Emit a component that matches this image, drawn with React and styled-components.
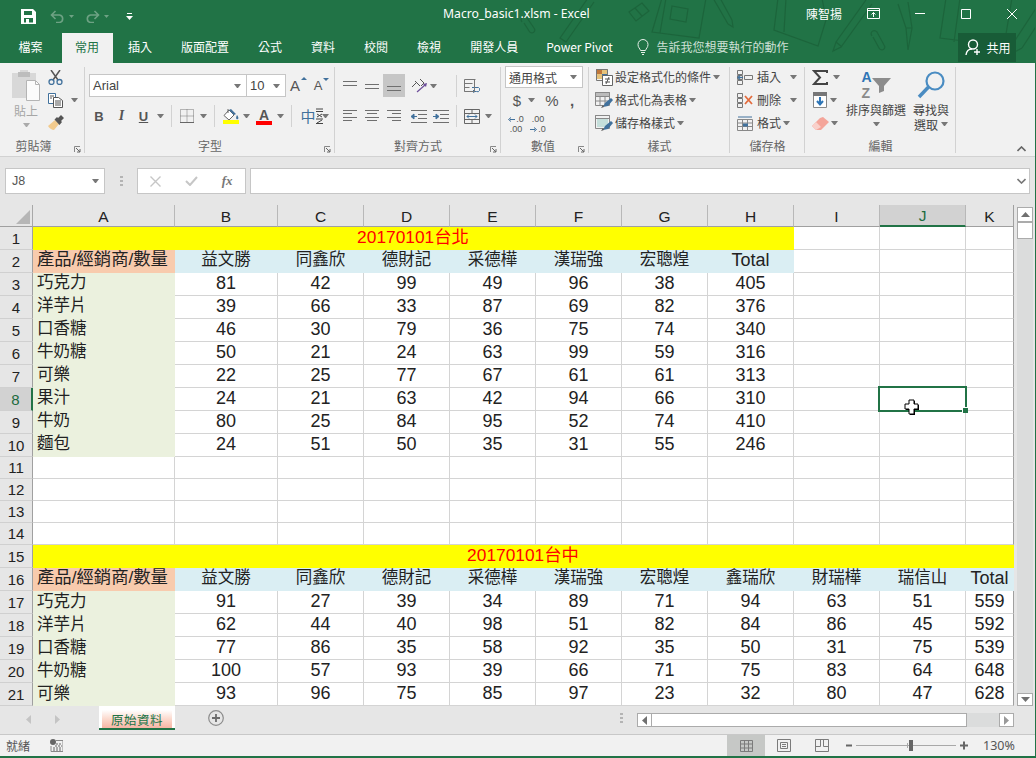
import React from 'react';
import styled, { createGlobalStyle } from 'styled-components';

const UI = `"Noto Sans", "Noto Sans CJK TC", sans-serif`;
const CJK = `"Noto Sans CJK TC", "Noto Sans", sans-serif`;
const SHEET = `"Liberation Sans", "Noto Sans CJK TC", sans-serif`;
const GREEN = '#217346';

const Global = createGlobalStyle`
  html, body { margin: 0; padding: 0; background: #e6e6e6; overflow: hidden; }
  * { box-sizing: border-box; }
`;

const Window = styled.div`
  position: relative; width: 1036px; height: 758px; display: flex; flex-direction: column;
  background: #e6e6e6; overflow: hidden; font-family: ${CJK}; font-size: 12px; color: #444;
  &::after { content: ''; position: absolute; inset: 0; border-right: 1px solid ${GREEN}; pointer-events: none; }
`;

/* ---------- header ---------- */
const Header = styled.header`position: relative; height: 63px; background: ${GREEN}; color: #fff; flex: none; overflow: hidden;`;
const Deco = styled.svg`position: absolute; left: 516px; top: 0; pointer-events: none;`;
const TitleBar = styled.div`position: relative; height: 33px; display: flex; align-items: center; padding-left: 21px;`;
const Qat = styled.div`width: 422px; display: flex; align-items: center; flex: none;`;
const QatIcon = styled.span`display: inline-flex; margin-left: ${p => p.$ml || 0}px;`;
const TitleText = styled.div`font: 12.2px ${UI}; width: 363px; flex: none; white-space: nowrap; margin-top: -6px;`;
const User = styled.div`font: 12px ${CJK}; width: 61px; flex: none; margin-top: -6px;`;
const WinBtn = styled.span`display: inline-flex; flex: none; margin-left: ${p => p.$ml || 0}px; margin-top: -6px;`;
const TabRow = styled.nav`position: relative; height: 30px; display: flex; align-items: stretch; padding-left: 4px;`;
const Tab = styled.div`
  padding: 0 ${p => p.$pr ?? 13.5}px 0 13.5px; margin: 0 ${p => p.$mr ?? 1}px 0 ${p => p.$ml ?? 1}px;
  display: flex; align-items: center; font: 12px ${CJK}; padding-bottom: 3px; white-space: nowrap;
  background: ${p => p.$active ? '#f1f1f1' : 'transparent'}; color: ${p => p.$active ? GREEN : '#fff'};
`;
const Tell = styled.div`display: flex; align-items: center; gap: 7px; margin-left: 10px; padding-bottom: 3px; font: 12px ${CJK}; color: #cfe0d6; width: 321px; flex: none;`;
const Share = styled.div`display: flex; align-items: center; gap: 4px; width: 58px; height: 29px; padding-left: 7px; background: #185c37; font: 12px ${CJK}; color: #fff;`;

/* ---------- ribbon ---------- */
const Ribbon = styled.section`height: 94px; flex: none; background: #f1f1f1; border-bottom: 1px solid #d2d2d2; display: flex;`;
const Group = styled.div`position: relative; width: ${p => p.$w}px; flex: none; display: flex; flex-direction: column; padding-left: ${p => p.$pl || 0}px;
  &::after { content: ''; position: absolute; right: 0; top: 4px; bottom: 3px; width: 1px; background: #d2d2d2; }`;
const Body = styled.div`flex: 1; display: flex; flex-direction: ${p => p.$col ? 'column' : 'row'}; padding-top: ${p => p.$pt ?? 2.5}px; gap: ${p => p.$gap || 0}px; min-height: 0;`;
const GroupLabel = styled.div`position: absolute; left: 0; right: ${p => p.$r || 0}px; bottom: -1px; height: 20px; text-align: center; font: 12px/18px ${CJK}; color: #666;`;
const Launcher = styled.svg`position: absolute; right: 4px; bottom: 3px;`;
const Row = styled.div`height: ${p => p.$h || 23}px; display: flex; align-items: center; flex: none;`;
const Tool = styled.span`
  display: inline-flex; align-items: center; justify-content: center; flex: none; height: 100%;
  width: ${p => p.$w}px; margin-left: ${p => p.$ml || 0}px; background: ${p => p.$on ? '#c6c6c6' : 'transparent'};
`;
const Caret = styled.span`
  display: inline-block; flex: none; margin-left: ${p => p.$ml || 0}px; width: 7px; height: 4px;
  border-left: 3.5px solid transparent; border-right: 3.5px solid transparent; border-top: 4px solid ${p => p.$c || '#777'};
`;
const VSep = styled.span`display: inline-block; flex: none; width: 1px; height: 22px; margin-left: ${p => p.$ml || 0}px; background: #d2d2d2;`;
const Combo = styled.div`
  width: ${p => p.$w}px; height: ${p => p.$h || 23}px; flex: none; margin-left: ${p => p.$ml || 0}px; background: #fff; border: 1px solid #c6c6c6;
  display: flex; align-items: center; justify-content: space-between; padding: 0 5px 0 3px; font: ${p => p.$cjk ? `12px ${CJK}` : `13px ${SHEET}`}; color: #444;
`;
const Letter = styled.span`font: ${p => p.$i ? 'italic ' : ''}${p => p.$b === false ? '' : 'bold '}${p => p.$s || 13}px ${p => p.$serif ? '"Liberation Serif", serif' : SHEET}; color: ${p => p.$c || '#555'};
  text-decoration: ${p => p.$u ? 'underline' : 'none'};`;
const Han = styled.span`font: 15px/16px ${CJK}; color: #41719c;`;
const Bar = styled.span`display: block; width: ${p => p.$w || 16}px; height: 4px; background: ${p => p.$c}; margin-top: -1px;`;
const ToolStack = styled.span`display: inline-flex; flex-direction: column; align-items: center;`;
const ToolLine = styled.span`display: inline-flex; align-items: ${p => p.$top ? 'flex-start' : 'center'}; gap: 1px;`;
const AZ = styled.span`display: inline-flex; flex-direction: column; align-items: flex-start; span { display: block; line-height: 16px; height: 16px; }`;
const ActionText = styled.span`font: 12px ${CJK}; color: #444; margin-left: ${p => p.$ml ?? 2}px; white-space: nowrap; flex: none; margin-top: -1px;`;
const Big = styled.div`width: ${p => p.$w}px; margin-left: ${p => p.$ml || 0}px; flex: none; display: flex; flex-direction: column; align-items: center; font: 12px/15px ${CJK}; color: ${p => p.$muted ? '#a6a6a6' : '#444'}; text-align: center;`;
const BigIcon = styled.div`height: ${p => p.$h || 36}px; display: flex; align-items: center; justify-content: center; flex: none; margin-bottom: ${p => p.$mb || 0}px; margin-top: ${p => p.$mt || 0}px;`;
const BigLine = styled.div`display: flex; align-items: center; justify-content: center; gap: 3px; height: 15px; white-space: nowrap;`;
const Col = styled.div`display: flex; flex-direction: column; flex: none; width: ${p => p.$w}px; margin-left: ${p => p.$ml || 0}px;`;
const Collapse = styled.div`flex: 1; display: flex; align-items: flex-end; justify-content: flex-end; padding: 0 10px 4px 0;`;

/* ---------- formula bar ---------- */
const FormulaBar = styled.div`height: 48px; flex: none; display: flex; align-items: flex-start; padding: 11px 6px 0 5px;`;
const NameBox = styled.div`width: 100px; height: 26px; background: #fff; border: 1px solid #c6c6c6; display: flex; align-items: center; justify-content: space-between; padding: 0 5px 0 6px; font: 12.5px ${SHEET}; color: #555;`;
const Grip = styled.div`width: 32px; height: 26px; display: flex; align-items: center; justify-content: center; flex: none;`;
const FxBox = styled.div`width: 109px; height: 26px; background: #fff; border: 1px solid #c6c6c6; display: flex; align-items: center; flex: none;`;
const FxBtn = styled.span`width: 36px; display: inline-flex; justify-content: center;`;
const FxText = styled.span`font: italic bold 13px "Liberation Serif", serif; color: #777;`;
const FormulaInput = styled.div`flex: 1; height: 26px; margin-left: 4px; background: #fff; border: 1px solid #c6c6c6; display: flex; align-items: center; justify-content: flex-end; padding-right: 3px;`;

/* ---------- sheet ---------- */
const SheetArea = styled.div`height: 501px; flex: none; display: flex;`;
const Grid = styled.div`
  width: 1014px; flex: none; display: grid;
  grid-template-columns: 33px 142px 103px repeat(8, 86px) 48px;
  grid-template-rows: 22px repeat(10, 23px) repeat(4, 22px) repeat(7, 23px);
  background: #fff; font-family: ${SHEET}; color: #222;
`;
const Corner = styled.div`background: #e6e6e6; border-right: 1px solid #a8a8a8; border-bottom: 1px solid #a0a0a0; display: flex; align-items: flex-end; justify-content: flex-end; padding: 0 2px 2px 0;`;
const ColHead = styled.div`
  display: flex; align-items: center; justify-content: center; font: 15.5px ${SHEET}; padding-top: 2px;
  color: ${p => p.$sel ? '#1d6b40' : '#222'}; background: ${p => p.$sel ? '#d2d2d2' : '#e6e6e6'};
  border-right: 1px solid ${p => p.$last ? '#a0a0a0' : '#b8b8b8'}; border-bottom: ${p => p.$sel ? `2px solid ${GREEN}` : '1px solid #a0a0a0'};
`;
const RowHead = styled.div`
  display: flex; align-items: center; justify-content: center; font: 15px ${SHEET};
  color: ${p => p.$sel ? '#1d6b40' : '#222'}; background: ${p => p.$sel ? '#d2d2d2' : '#e6e6e6'};
  border-right: ${p => p.$sel ? `2px solid ${GREEN}` : '1px solid #a0a0a0'}; border-bottom: 1px solid #d0d0d0;
`;
const Cell = styled.div`
  position: relative; display: flex; align-items: center; justify-content: ${p => p.$left ? 'flex-start' : 'center'};
  grid-column: ${p => p.$span ? `span ${p.$span}` : 'auto'}; padding: 0 0 ${p => p.$pb ?? 2}px ${p => p.$left ? 4 : 0}px; white-space: nowrap; overflow: ${p => p.$clip ? 'hidden' : 'visible'};
  font-size: ${p => p.$fs || 18}px; line-height: 1;
  color: ${p => p.$red ? '#f00' : '#222'}; background: ${p => p.$bg || '#fff'};
  border-right: 1px solid ${p => p.$edge ? '#a0a0a0' : p.$bg ? 'transparent' : '#d4d4d4'};
  border-bottom: 1px solid ${p => p.$bg ? 'transparent' : '#d4d4d4'};
`;
const Selection = styled.div`position: absolute; left: -2px; top: -2px; right: -2px; bottom: -2px; border: 2px solid ${GREEN}; z-index: 2;`;
const Handle = styled.div`position: absolute; right: -3px; bottom: -3px; width: 6px; height: 6px; background: ${GREEN}; border-left: 1px solid #fff; border-top: 1px solid #fff;`;
const Cursor = styled.svg`position: absolute; left: 24px; top: 11px; z-index: 3;`;
const VScroll = styled.div`width: 22px; flex: none; display: flex; flex-direction: column; padding: 2px 3px 0 3px;`;
const ScrollBtn = styled.div`height: ${p => p.$h || 15}px; flex: none; background: #fff; border: 1px solid #ababab; display: flex; align-items: center; justify-content: center;`;
const VTrack = styled.div`flex: 1; background: #dbdcdc;`;
const TabBar = styled.div`height: 28px; flex: none; display: flex; align-items: flex-start;`;
const NavArrow = styled.span`width: 29px; height: 24px; display: flex; align-items: center; justify-content: center; flex: none; margin-top: 1px; margin-left: ${p => p.$ml || 0}px;`;
const SheetTab = styled.div`width: 76px; height: 24px; margin-left: 27px; flex: none; background: #fff; border-bottom: 2px solid ${GREEN}; padding: 4px 3px 0 3px;`;
const SheetTabFill = styled.div`height: 18px; background: linear-gradient(#ffffff, #fbd9cd 50%, #f7b5a5); display: flex; align-items: center; justify-content: center; font: 12.5px ${CJK}; color: ${GREEN}; letter-spacing: .5px;`;
const AddSheet = styled.span`display: inline-flex; margin: 4px 0 0 33px; flex: none;`;
const TabGrip = styled.span`display: inline-flex; margin: 7px 0 0 396px; flex: none;`;
const HScroll = styled.div`display: flex; width: 377px; height: 14px; margin: 7px 0 0 14px; flex: none; background: #dbdcdc;`;
const HBtn = styled.div`width: 15px; height: 14px; flex: none; background: #fff; border: 1px solid #ababab; display: flex; align-items: center; justify-content: center;`;
const HThumb = styled.div`width: 315px; height: 14px; flex: none; background: #fff; border: 1px solid #ababab; border-left: none;`;
const HGap = styled.div`flex: 1;`;

/* ---------- status ---------- */
const StatusBar = styled.footer`height: 22px; flex: none; background: #f1f1f1; border-top: 1px solid #c8c8c8; display: flex; align-items: stretch; padding-left: 6px; font: 12px ${CJK}; color: #555;`;
const Ready = styled.span`display: flex; align-items: center; width: 44px; flex: none;`;
const StatusIcon = styled.span`display: flex; align-items: center; flex: none;`;
const ViewBtn = styled.span`width: ${p => p.$w || 38}px; flex: none; display: flex; align-items: center; justify-content: center; background: ${p => p.$on ? '#c6c8c6' : 'transparent'}; margin-left: ${p => p.$ml || 0}px;`;
const ZoomSlider = styled.span`display: flex; align-items: center; flex: none; margin-left: 4px;`;
const ZoomText = styled.span`display: flex; align-items: center; margin-left: 14px; font: 12.5px ${UI}; color: #555; flex: none;`;
const BottomStrip = styled.div`height: 2px; flex: none; background: ${GREEN};`;

/* ---------- icons ---------- */
const S = ({ w, h, children, ...r }) => <svg width={w} height={h} viewBox={`0 0 ${w} ${h}`} fill="none" style={{ display: 'block', flex: 'none' }} {...r}>{children}</svg>;
const SaveI = () => <S w={15} h={15}><path d="M0 0h12l3 3v12H0z" fill="#fff" /><path d="M3 2h8v4H3z" fill={GREEN} /><path d="M3 9h9v4.500H3z" fill={GREEN} /><path d="M5 10h3v5H5z" fill="#fff" /></S>;
const UndoI = ({ flip }) => <S w={15} h={13} style={{ display: 'block', transform: flip ? 'scaleX(-1)' : 'none' }}><path d="M1.500 5h8a3.800 3.800 0 0 1 0 7.500H6M5.500 1 1.500 5l4 4" stroke="#6ea284" strokeWidth="1.600" /></S>;
const QCaret = () => <S w={5} h={3}><path d="M0 0h5L2.500 3z" fill="#6ea284" /></S>;
const CustI = () => <S w={7} h={7}><path d="M1 0h5v1H1zM0 3h7L3.500 7z" fill="#fff" /></S>;
const RestoreI = () => <S w={13} h={11}><path d="M.5.5h12v10H.5zM.5 2.500h12" stroke="#fff" /><path d="M6.500 9V4.500M4.500 6.500l2-2 2 2" stroke="#fff" /></S>;
const MinI = () => <S w={10} h={1}><path d="M0 .5h10" stroke="#fff" /></S>;
const MaxI = () => <S w={10} h={10}><path d="M.5.5h9v9h-9z" stroke="#fff" /></S>;
const CloseI = () => <S w={10} h={10}><path d="M0 0l10 10M10 0 0 10" stroke="#fff" /></S>;
const BulbI = () => <S w={12} h={16}><path d="M3.500 11.500C3 9.500 1 8.500 1 5.500a5 5 0 0 1 10 0c0 3-2 4-2.500 6zM4 13.500h4M5 15.500h2" stroke="#e6efe9" /></S>;
const PersonI = () => <S w={17} h={17}><circle cx="8" cy="5.500" r="4.500" stroke="#fff" strokeWidth="1.400" /><path d="M1 16c.5-4 3-6 6-6M12 10v6M9 13h6" stroke="#fff" strokeWidth="1.400" /></S>;

const PasteI = () => <S w={28} h={32}><path d="M0 4h8V1h8v3h8v25H0z" fill="#d8d8d8" /><path d="M6 3h12v5H6z" fill="#bdbdbd" /><path d="M14.500 11.500h9l4 4v16h-13z" fill="#fbfbfb" stroke="#b4b4b4" /><path d="M23.500 11.500v4h4" stroke="#b4b4b4" /></S>;
const ScissorI = () => <S w={15} h={15}><path d="M3 0l7 10M12 0 5 10" stroke="#555" strokeWidth="1.500" /><circle cx="3.500" cy="12" r="2.500" stroke="#41719c" strokeWidth="1.300" /><circle cx="11.500" cy="12" r="2.500" stroke="#41719c" strokeWidth="1.300" /></S>;
const CopyI = () => <S w={15} h={15}><path d="M.5.5h7v10h-7z" fill="#fff" stroke="#41719c" /><path d="M5.500 4.500h5l4 3v7h-9z" fill="#fff" stroke="#555" /><path d="M7 8h6M7 10h6M7 12h6M2 3h4M2 5h2" stroke="#555" /></S>;
const BrushI = () => <S w={16} h={16}><path d="M7 5l4 4-5 6C4 15 1 13 0 11z" fill="#f2cb8e" /><path d="M6.500 4.500 9 2l1 1 3-3 3 3-3 3 1 1-2.500 3z" fill="#555" /></S>;
const LauncherI = () => <Launcher width="7" height="7" viewBox="0 0 7 7" fill="none"><path d="M.5 6V.5H6" stroke="#888" /><path d="M2 2l4 4M3 6h3V3" stroke="#666" /></Launcher>;
const TriUp = ({ c = '#41719c' }) => <S w={6} h={3}><path d="M3 0l3 3H0z" fill={c} /></S>;
const TriDn = ({ c = '#41719c' }) => <S w={6} h={3}><path d="M0 0h6L3 3z" fill={c} /></S>;
const BorderI = () => <S w={14} h={14}><path d="M.5.5h13v13H.5zM.5 7h13M7 .5v13" stroke="#777" strokeDasharray="1 1" /><path d="M0 13.500h14" stroke="#666" /></S>;
const BucketI = () => <S w={16} h={12}><path d="M6 1 1 6.500 6 11l5-5z" fill="#fff" stroke="#666" /><path d="M5 0v4" stroke="#666" /><path d="M11 6l-5-5 2-1 5 5zM14 6c1 1.500 2 3 1 4s-3 0-1-4" fill="#41719c" /></S>;
const ZigI = () => <S w={7} h={16}><path d="M0 1h7M0 3.500h7M1 6l5 3M6 6 1 9M0 11h7M1 15l5-3M0 15.500h7" stroke="#444" /></S>;
const HLines = ({ rows, w = 14, h = 12 }) => <S w={w} h={h}>{rows.map(([a, b, y], i) => <path key={i} d={`M${a} ${y}.5H${b}`} stroke="#6f6f6f" />)}</S>;
const Orient = () => <S w={17} h={15}><path d="M1 9l5-5M4 3l5 5M9 1l4 4-3 3" stroke="#555" /><path d="M6 14l8-7" stroke="#6e4f9a" strokeWidth="1.200" /><path d="M16 5l-4 1 3 3z" fill="#6e4f9a" /></S>;
const IndentI = ({ inc }) => <S w={16} h={13}>{[0, 4, 8, 12].map(y => <path key={y} d={`M${y === 0 || y === 12 ? 0 : 7} ${y}.5h16`} stroke="#6f6f6f" />)}<path d={inc ? 'M0 6.500h4M3 4l3 2.500L3 9z' : 'M6 6.500H2M3 4 0 6.500 3 9z'} fill="#41719c" stroke="#41719c" /></S>;
const WrapI = () => <S w={16} h={14}><path d="M.5.5h11M.5 4.500h8M.5 8.500h5M.5 12.500h5" stroke="#777" /><path d="M8 8.500h6.500a2 2 0 0 1-2 4H9M10.500 10.500l-2 2 2 1.500" stroke="#41719c" /><path d="M.5.500v12h10V.5" stroke="#777" /></S>;
const MergeI = () => <S w={16} h={15}><path d="M.5.5h15v14H.5zM.5 4.500h15M.5 10.500h15M8 .5v4M8 10.500v4" stroke="#666" /><path d="M3 7.500h10M5 5.500l-2 2 2 2M11 5.500l2 2-2 2" stroke="#41719c" /></S>;
const Arrow5 = ({ left }) => <S w={7} h={5}><path d={left ? 'M7 2.500H2M3 .5.500 2.500l2.500 2' : 'M0 2.500h5M4 .5l2.500 2L4 4.500'} stroke="#41719c" /></S>;
const DecI = ({ inc }) => inc
  ? <ToolStack><Letter $b={false} $s={9} $c="#555">.00</Letter><ToolLine><Arrow5 /><Letter $b={false} $s={9} $c="#555">.0</Letter></ToolLine></ToolStack>
  : <ToolStack><ToolLine><Arrow5 left /><Letter $b={false} $s={9} $c="#555">.0</Letter></ToolLine><Letter $b={false} $s={9} $c="#555">.00</Letter></ToolStack>;
const CondI = () => <S w={17} h={17}><path d="M0 0h6v5H0z" fill="#c0783c" /><path d="M6 0h6v5H6z" fill="#e6c27a" /><path d="M0 5h6v5H0z" fill="#e6c27a" /><path d="M6 5h6v5H6z" fill="#41719c" /><path d="M.5.5h11v11H.5z" stroke="#777" /><path d="M6.500 6.500h10v10h-10z" fill="#fff" stroke="#666" /><path d="M9 10h5M9 13h5M13 8l-3 7" stroke="#555" /></S>;
const TableI = () => <S w={18} h={17}><path d="M.5.5h14v13H.5zM.5 4.500h14M.5 9h14M5 .5v13M10 .5v13" stroke="#888" /><path d="M.5.500h14v4H.5z" fill="#bbb" stroke="#888" /><path d="M8 15l2-4 6-5 2 2-5 6z" fill="#41719c" /><path d="M6 16l3-1-1-2z" fill="#555" /></S>;
const CellStyleI = () => <S w={18} h={17}><path d="M.5.500h14v13H.5z" stroke="#888" /><path d="M2 3h11v9H2z" fill="#c5dfdb" /><path d="M.5.500h14v3H.5z" stroke="#888" /><path d="M8 15l2-4 6-5 2 2-5 6z" fill="#41719c" /><path d="M6 16l3-1-1-2z" fill="#555" /></S>;
const InsertI = () => <S w={16} h={15}><path d="M.5.5h5v4h-5zM.5 10.500h5v4h-5zM7.500 5.500h8v4h-8z" stroke="#777" /><path d="M.5 5.500h5v4h-5z" fill="#d8d8d8" stroke="#777" /><path d="M1 7.500h5M3 5.500l-2 2 2 2" stroke="#41719c" strokeWidth="1.200" /></S>;
const DeleteI = () => <S w={16} h={15}><path d="M.5.5h5v4h-5zM.5 10.500h5v4h-5zM.5 5.500h5v4h-5z" stroke="#777" /><path d="M8 3l7 8M15 3l-7 8" stroke="#e36b3c" strokeWidth="1.800" /></S>;
const FormatI = () => <S w={16} h={15}><path d="M.5 3.500h15v11H.5zM.5 7h15M.5 10.500h15M5.500 3.500v11M10.500 3.500v11" stroke="#888" /><path d="M6 7.500h5v3H6z" fill="#41719c" /><path d="M1 1h14" stroke="#41719c" /></S>;
const SigmaI = () => <S w={16} h={15}><path d="M15 3V1H2l6 6.500L2 14h13v-2" stroke="#444" strokeWidth="2" /></S>;
const FillI = () => <S w={14} h={16}><path d="M.5.500h13v15H.5z" fill="#fff" stroke="#888" /><path d="M0 0h14v4H0z" fill="#777" /><path d="M7 5v7M4 9l3 3.500L10 9" stroke="#2e75b6" strokeWidth="2" /></S>;
const EraserI = () => <S w={17} h={13}><path d="M0 9l8-8 3-1 6 5-8 8H4z" fill="#f4a59a" /><path d="M4 13 0 9l4-4 5 5z" fill="#f9d0ca" /></S>;
const FunnelI = () => <S w={19} h={15}><path d="M0 0h19l-7 8v5l-5 2V8z" fill="#8c8c8c" /></S>;
const FindI = () => <S w={29} h={28}><circle cx="18" cy="10" r="8.500" stroke="#4a8cc2" strokeWidth="2.200" /><path d="M11.500 16 2 26" stroke="#4a8cc2" strokeWidth="3.500" /></S>;
const Chevron = ({ up, c = '#666' }) => <S w={9} h={6}><path d={up ? 'M.5 5 4.500 1 8.500 5' : 'M.5 1l4 4 4-4'} stroke={c} strokeWidth="1.600" /></S>;
const X = () => <S w={11} h={11}><path d="M.5.5l10 10M10.500.5l-10 10" stroke="#c6c6c6" strokeWidth="1.400" /></S>;
const Check = () => <S w={13} h={10}><path d="M1 5l4 4 7-8" stroke="#c6c6c6" strokeWidth="2" /></S>;
const Dots = ({ c = '#b4b4b4' }) => <S w={3} h={11}>{[0, 4, 8].map(y => <path key={y} d={`M0 ${y}h3v2H0z`} fill={c} />)}</S>;
const CornerTri = () => <S w={14} h={14}><path d="M14 0v14H0z" fill="#b6b6b6" /></S>;
const ArrowUp = ({ c = '#707070' }) => <S w={9} h={5}><path d="M4.500 0 9 5H0z" fill={c} /></S>;
const ArrowDn = ({ c = '#707070' }) => <S w={9} h={5}><path d="M0 0h9L4.500 5z" fill={c} /></S>;
const ArrowL = ({ c = '#707070' }) => <S w={5} h={9}><path d="M5 0v9L0 4.500z" fill={c} /></S>;
const ArrowR = ({ c = '#707070' }) => <S w={5} h={9}><path d="M0 0v9l5-4.500z" fill={c} /></S>;
const PlusC = () => <S w={16} h={16}><circle cx="8" cy="8" r="7.300" stroke="#8c8c8c" strokeWidth="1.200" /><path d="M4 8h8M8 4v8" stroke="#6c6c6c" strokeWidth="1.800" /></S>;
const MacroI = () => <S w={13} h={13}><circle cx="3" cy="3" r="3" fill="#666" /><path d="M6 1.500h7v11H1V7" stroke="#888" /><path d="M3 9h9M3 11h9M5 7h7M6 5h6" stroke="#666" strokeDasharray="2 1" /></S>;
const NormalI = () => <S w={13} h={12}><path d="M.5.5h12v11H.5zM.5 4h12M.5 8h12M4.500.5v11M8.500.5v11" stroke="#7b7b7b" /></S>;
const PageI = () => <S w={14} h={13}><path d="M.5.5h13v12H.5z" stroke="#7b7b7b" /><path d="M3.500 3.500h7v6h-7zM5 5.500h4M5 7.500h4" stroke="#7b7b7b" /></S>;
const BreakI = () => <S w={14} h={13}><path d="M.5 12.500V.5h13v12zM.5 7.500h5V.5M8.500.5v7h5" stroke="#7b7b7b" /></S>;
const SliderI = () => <S w={124} h={11}><path d="M1 5.500h6" stroke="#666" strokeWidth="2" /><path d="M11 5.500h100" stroke="#a8a8a8" /><path d="M62.500 3v5" stroke="#a8a8a8" /><path d="M64 0h4v11h-4z" fill="#666" /><path d="M115 5.500h8M119 1.500v8" stroke="#666" strokeWidth="2" /></S>;
const CursorI = () => <Cursor width="16" height="16" viewBox="0 0 16 16"><path d="M5 1h5v4h4v5h-4v5H5v-5H1V5h4z" fill="#000" transform="translate(1 1)" /><path d="M5 1h5v4h4v5h-4v5H5v-5H1V5h4z" fill="#fff" stroke="#000" /></Cursor>;

const DecoArt = () => (
  <Deco width="520" height="63" viewBox="0 0 520 63" fill="none" stroke="#1b6038" strokeWidth="1.200" opacity=".75">
    <path d="M6 22c-3-4 2-7 5-4l7 10c3 4-3 7-5 3l-5-8" />
    <path d="M72-2 44 38l6 4L78 2" />
    <path d="M113 12 126 3l7 8-13 10zM119 8l7 8" />
    <path d="M146-2h44l-7 40-47-6zM156 6l16 3-2 13-16-3zM150-2l-6 35" />
    <path d="M197-2l15 26M204-2l12 22M212 24l5 3-1-7" />
    <path d="M262-2l-4 32 44 16 8-26-4-22M270-2l-2 34" />
    <path d="M350 0l-30 42-3 9 8-4 31-43M320 42l6 5" />
    <path d="M356 36c-3-4 2-7 5-4l7 13c3 4-3 7-5 3l-6-11" />
    <path d="M382 4l8 24 2 22M392 2l4 26-4 22M390 28h6" />
    <path d="M430-2l-6 40 64 8 8-48M444-2l-6 44" />
    <path d="M498 42 528-4M506 48l30-46M498 42l-3 12 11-6" />
  </Deco>
);

/* ---------- data ---------- */
const COLS = ['A', 'B', 'C', 'D', 'E', 'F', 'G', 'H', 'I', 'J', 'K'];
const NAMES = ['巧克力', '洋芋片', '口香糖', '牛奶糖', '可樂', '果汁', '牛奶', '麵包'];
const T1 = [[81, 42, 99, 49, 96, 38, 405], [39, 66, 33, 87, 69, 82, 376], [46, 30, 79, 36, 75, 74, 340], [50, 21, 24, 63, 99, 59, 316], [22, 25, 77, 67, 61, 61, 313], [24, 21, 63, 42, 94, 66, 310], [80, 25, 84, 95, 52, 74, 410], [24, 51, 50, 35, 31, 55, 246]];
const T2 = [[91, 27, 39, 34, 89, 71, 94, 63, 51, 559], [62, 44, 40, 98, 51, 82, 84, 86, 45, 592], [77, 86, 35, 58, 92, 35, 50, 31, 75, 539], [100, 57, 93, 39, 66, 71, 75, 83, 64, 648], [93, 96, 75, 85, 97, 23, 32, 80, 47, 628]];
const H1 = ['益文勝', '同鑫欣', '德財記', '采德樺', '漢瑞強', '宏聰煌', 'Total'];
const H2 = ['益文勝', '同鑫欣', '德財記', '采德樺', '漢瑞強', '宏聰煌', '鑫瑞欣', '財瑞樺', '瑞信山', 'Total'];
const TITLE = '產品/經銷商/數量';
const C = { y: '#ffff00', p: '#f8cbad', b: '#daeef3', g: '#ebf1de' };

function buildRows() {
  const out = [];
  const R = (n, cells) => out.push(<RowHead key={`h${n}`} $sel={n === 8}>{n}</RowHead>, ...cells);
  const k = (r, c) => `${r}-${c}`;
  const Head = (r, t, i, clip) => {
    const latin = t === 'Total';
    return <Cell key={k(r, i)} $bg={C.b} $clip={clip} $fs={latin ? 18 : 16.5} $pb={latin ? 3 : 3}>{t}</Cell>;
  };
  const blanks = (r, from) => COLS.slice(from).map(c => (
    <Cell key={k(r, c)} $edge={c === 'K'}>
      {r === 8 && c === 'J' && <Selection><Handle /><CursorI /></Selection>}
    </Cell>
  ));
  R(1, [<Cell key="m1" $span={8} $bg={C.y} $red $fs={17.33} $pb={0}>20170101台北</Cell>, ...blanks(1, 8)]);
  R(2, [<Cell key="a2" $left $bg={C.p} $fs={17.33} $pb={3}>{TITLE}</Cell>, ...H1.map((t, i) => Head(2, t, i)), ...blanks(2, 8)]);
  T1.forEach((vals, i) => {
    const r = i + 3;
    R(r, [<Cell key={k(r, 'a')} $left $bg={C.g} $fs={16.5} $pb={3}>{NAMES[i]}</Cell>, ...vals.map((v, j) => <Cell key={k(r, j)}>{v}</Cell>), ...blanks(r, 8)]);
  });
  [11, 12, 13, 14].forEach(r => R(r, blanks(r, 0)));
  R(15, [<Cell key="m15" $span={11} $bg={C.y} $red $fs={17.33} $pb={1}>20170101台中</Cell>]);
  R(16, [<Cell key="a16" $left $bg={C.p} $fs={17.33} $pb={3}>{TITLE}</Cell>, ...H2.map((t, i) => Head(16, t, i, i === 9))]);
  T2.forEach((vals, i) => {
    const r = i + 17;
    R(r, [<Cell key={k(r, 'a')} $left $bg={C.g} $fs={16.5} $pb={2}>{NAMES[i]}</Cell>, ...vals.map((v, j) => <Cell key={k(r, j)} $edge={j === 9}>{v}</Cell>)]);
  });
  return out;
}

const TOP = [[0, 14, 1], [0, 14, 5]];
const MID = [[0, 14, 4], [0, 14, 8]];
const BOT = [[0, 14, 6], [0, 14, 10]];
const LEFT = [[0, 14, 0], [0, 9, 3], [0, 14, 7], [0, 9, 10]];
const CENTER = [[0, 14, 0], [2, 12, 3], [0, 14, 7], [2, 12, 10]];
const RIGHT = [[0, 14, 0], [5, 14, 3], [0, 14, 7], [5, 14, 10]];

export default function App() {
  return (
    <Window>
      <Global />
      <Header>
        <DecoArt />
        <TitleBar>
          <Qat>
            <QatIcon><SaveI /></QatIcon>
            <QatIcon $ml={14}><UndoI /></QatIcon>
            <QatIcon $ml={4}><QCaret /></QatIcon>
            <QatIcon $ml={11}><UndoI flip /></QatIcon>
            <QatIcon $ml={4}><QCaret /></QatIcon>
            <QatIcon $ml={17}><CustI /></QatIcon>
          </Qat>
          <TitleText>Macro_basic1.xlsm - Excel</TitleText>
          <User>陳智揚</User>
          <WinBtn><RestoreI /></WinBtn>
          <WinBtn $ml={35}><MinI /></WinBtn>
          <WinBtn $ml={36}><MaxI /></WinBtn>
          <WinBtn $ml={36}><CloseI /></WinBtn>
        </TitleBar>
        <TabRow>
          <Tab $pr={19} $mr={0}>檔案</Tab>
          <Tab $active $ml={0}>常用</Tab>
          <Tab>插入</Tab>
          <Tab>版面配置</Tab>
          <Tab>公式</Tab>
          <Tab>資料</Tab>
          <Tab>校閱</Tab>
          <Tab>檢視</Tab>
          <Tab>開發人員</Tab>
          <Tab $ml={0}>Power Pivot</Tab>
          <Tell><BulbI />告訴我您想要執行的動作</Tell>
          <Share><PersonI />共用</Share>
        </TabRow>
      </Header>

      <Ribbon>
        <Group $w={85} $pl={12}>
          <Body>
            <Big $w={28} $muted>
              <BigIcon $h={35} $mt={2}><PasteI /></BigIcon>
              <BigLine>貼上</BigLine>
              <BigLine><Caret $c="#aaa" /></BigLine>
            </Big>
            <Col $w={30} $ml={8}>
              <Row><Tool $w={15}><ScissorI /></Tool></Row>
              <Row><Tool $w={15}><CopyI /></Tool><Caret $ml={8} /></Row>
              <Row><Tool $w={16}><BrushI /></Tool></Row>
            </Col>
          </Body>
          <GroupLabel $r={18}>剪貼簿</GroupLabel>
          <LauncherI />
        </Group>

        <Group $w={250} $pl={4}>
          <Body $col $pt={11} $gap={7}>
            <Row>
              <Combo $w={158}>Arial<Caret /></Combo>
              <Combo $w={40} $ml={-1}>10<Caret /></Combo>
              <Tool $w={15} $ml={5}><ToolLine $top><Letter $s={15} $b={false}>A</Letter><TriUp /></ToolLine></Tool>
              <Tool $w={15} $ml={8}><ToolLine $top><Letter $s={13} $b={false}>A</Letter><TriDn /></ToolLine></Tool>
            </Row>
            <Row $h={24}>
              <Tool $w={20}><Letter>B</Letter></Tool>
              <Tool $w={21} $ml={2}><Letter $i $serif $s={14}>I</Letter></Tool>
              <Tool $w={21} $ml={1}><Letter $u>U</Letter></Tool>
              <Caret $ml={3} />
              <VSep $ml={7} />
              <Tool $w={14} $ml={8}><BorderI /></Tool>
              <Caret $ml={6} />
              <VSep $ml={7} />
              <Tool $w={17} $ml={7}><ToolStack><BucketI /><Bar $c="#ffff00" /></ToolStack></Tool>
              <Caret $ml={4} />
              <Tool $w={16} $ml={6}><ToolStack><Letter $s={14} style={{ lineHeight: '14px' }}>A</Letter><Bar $c="#ff0000" /></ToolStack></Tool>
              <Caret $ml={5} />
              <VSep $ml={7} />
              <Tool $w={23} $ml={8}><Han>中</Han><ZigI /></Tool>
              <Caret $ml={-1} />
            </Row>
          </Body>
          <GroupLabel>字型</GroupLabel>
          <LauncherI />
        </Group>

        <Group $w={166} $pl={8}>
          <Body $col $pt={11} $gap={7}>
            <Row>
              <Tool $w={14}><HLines rows={TOP} /></Tool>
              <Tool $w={14} $ml={8}><HLines rows={MID} /></Tool>
              <Tool $w={22} $ml={4} $on><HLines rows={BOT} /></Tool>
              <Tool $w={17} $ml={6}><Orient /></Tool>
              <Caret $ml={2} />
              <VSep $ml={19} />
              <Tool $w={16} $ml={7}><WrapI /></Tool>
            </Row>
            <Row $h={24}>
              <Tool $w={14}><HLines rows={LEFT} /></Tool>
              <Tool $w={14} $ml={8}><HLines rows={CENTER} /></Tool>
              <Tool $w={14} $ml={8}><HLines rows={RIGHT} /></Tool>
              <Tool $w={16} $ml={10}><IndentI /></Tool>
              <Tool $w={16} $ml={6}><IndentI inc /></Tool>
              <VSep $ml={7} />
              <Tool $w={16} $ml={7}><MergeI /></Tool>
              <Caret $ml={5} />
            </Row>
          </Body>
          <GroupLabel>對齊方式</GroupLabel>
          <LauncherI />
        </Group>

        <Group $w={88} $pl={4}>
          <Body $col $pt={3}>
            <Combo $w={78} $h={22} $cjk>通用格式<Caret /></Combo>
            <Row $h={24}>
              <Tool $w={10} $ml={7}><Letter $b={false} $s={15}>$</Letter></Tool>
              <Caret $ml={6} />
              <Tool $w={14} $ml={10}><Letter $b={false} $s={15}>%</Letter></Tool>
              <Tool $w={6} $ml={10}><Letter $s={15}>,</Letter></Tool>
            </Row>
            <Row $h={24}>
              <Tool $w={16} $ml={3}><DecI /></Tool>
              <Tool $w={16} $ml={6}><DecI inc /></Tool>
            </Row>
          </Body>
          <GroupLabel $r={4}>數值</GroupLabel>
          <LauncherI />
        </Group>

        <Group $w={141} $pl={6}>
          <Body $col>
            <Row><Tool $w={18}><CondI /></Tool><ActionText>設定格式化的條件</ActionText><Caret $ml={2} /></Row>
            <Row><Tool $w={18}><TableI /></Tool><ActionText>格式化為表格</ActionText><Caret $ml={2} /></Row>
            <Row><Tool $w={18}><CellStyleI /></Tool><ActionText>儲存格樣式</ActionText><Caret $ml={2} /></Row>
          </Body>
          <GroupLabel>樣式</GroupLabel>
        </Group>

        <Group $w={75} $pl={7}>
          <Body $col>
            <Row><Tool $w={16}><InsertI /></Tool><ActionText $ml={4}>插入</ActionText><Caret $ml={9} /></Row>
            <Row><Tool $w={16}><DeleteI /></Tool><ActionText $ml={4}>刪除</ActionText><Caret $ml={9} /></Row>
            <Row><Tool $w={16}><FormatI /></Tool><ActionText $ml={4}>格式</ActionText><Caret $ml={2} /></Row>
          </Body>
          <GroupLabel>儲存格</GroupLabel>
        </Group>

        <Group $w={151}>
          <Body>
            <Col $w={41} $ml={7}>
              <Row><Tool $w={16}><SigmaI /></Tool><Caret $ml={5} /></Row>
              <Row><Tool $w={15}><FillI /></Tool><Caret $ml={3} /></Row>
              <Row><Tool $w={17}><EraserI /></Tool><Caret $ml={2} /></Row>
            </Col>
            <Big $w={62} $ml={-8}>
              <BigIcon $h={29} $mt={5} $mb={2}>
                <AZ><Letter $s={14} $c="#2e75b6">A</Letter><Letter $s={14} $c="#8a8a8a">Z</Letter></AZ>
                <FunnelI />
              </BigIcon>
              <BigLine>排序與篩選</BigLine>
              <BigLine><Caret /></BigLine>
            </Big>
            <Big $w={40} $ml={4}>
              <BigIcon $h={29} $mt={5} $mb={2}><FindI /></BigIcon>
              <BigLine>尋找與</BigLine>
              <BigLine>選取<Caret /></BigLine>
            </Big>
          </Body>
          <GroupLabel>編輯</GroupLabel>
        </Group>

        <Collapse><Chevron up /></Collapse>
      </Ribbon>

      <FormulaBar>
        <NameBox>J8<Caret /></NameBox>
        <Grip><Dots /></Grip>
        <FxBox>
          <FxBtn><X /></FxBtn>
          <FxBtn><Check /></FxBtn>
          <FxBtn><FxText>fx</FxText></FxBtn>
        </FxBox>
        <FormulaInput><Chevron c="#777" /></FormulaInput>
      </FormulaBar>

      <SheetArea>
        <Grid>
          <Corner><CornerTri /></Corner>
          {COLS.map(c => <ColHead key={c} $sel={c === 'J'} $last={c === 'K'}>{c}</ColHead>)}
          {buildRows()}
        </Grid>
        <VScroll>
          <ScrollBtn><ArrowUp /></ScrollBtn>
          <ScrollBtn $h={17} />
          <VTrack />
          <ScrollBtn $h={13}><ArrowDn /></ScrollBtn>
        </VScroll>
      </SheetArea>

      <TabBar>
        <NavArrow $ml={14}><ArrowL c="#c4c4c4" /></NavArrow>
        <NavArrow><ArrowR c="#c4c4c4" /></NavArrow>
        <SheetTab><SheetTabFill>原始資料</SheetTabFill></SheetTab>
        <AddSheet><PlusC /></AddSheet>
        <TabGrip><Dots /></TabGrip>
        <HScroll>
          <HBtn><ArrowL /></HBtn>
          <HThumb />
          <HGap />
          <HBtn><ArrowR c="#999" /></HBtn>
        </HScroll>
      </TabBar>

      <StatusBar>
        <Ready>就緒</Ready>
        <StatusIcon><MacroI /></StatusIcon>
        <ViewBtn $on $ml={664}><NormalI /></ViewBtn>
        <ViewBtn><PageI /></ViewBtn>
        <ViewBtn><BreakI /></ViewBtn>
        <ZoomSlider><SliderI /></ZoomSlider>
        <ZoomText>130%</ZoomText>
      </StatusBar>
      <BottomStrip />
    </Window>
  );
}
